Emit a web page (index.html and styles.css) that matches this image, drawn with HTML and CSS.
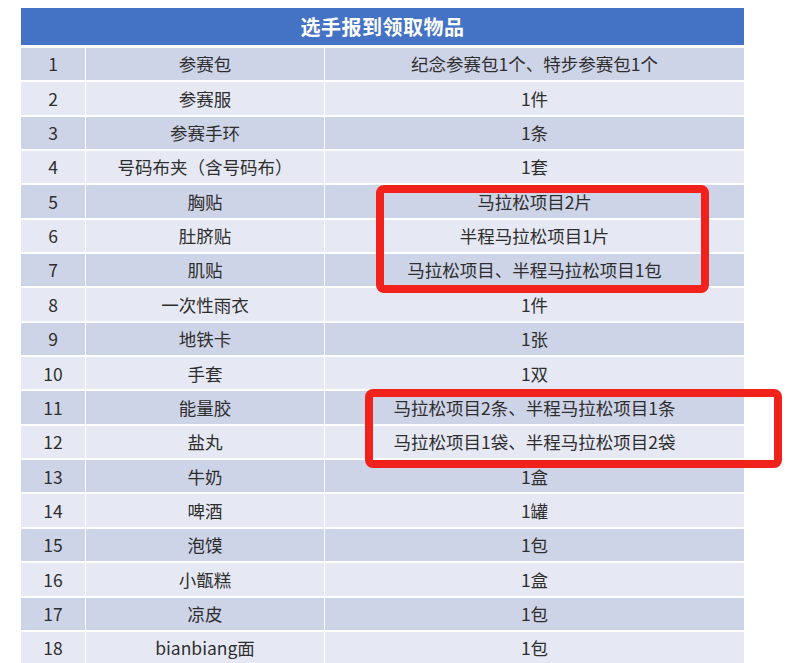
FILE: index.html
```html
<!DOCTYPE html>
<html lang="zh-CN">
<head>
<meta charset="utf-8">
<title>选手报到领取物品</title>
<link rel="stylesheet" href="styles.css">
</head>
<body>
<div class="page">
  <div class="table">
    <div class="head">选手报到领取物品</div>
    <div class="rows">
      <div class="row odd"><div class="c">1</div><div class="c">参赛包</div><div class="c">纪念参赛包1个、特步参赛包1个</div></div>
      <div class="row even"><div class="c">2</div><div class="c">参赛服</div><div class="c">1件</div></div>
      <div class="row odd"><div class="c">3</div><div class="c">参赛手环</div><div class="c">1条</div></div>
      <div class="row even"><div class="c">4</div><div class="c">号码布夹（含号码布）</div><div class="c">1套</div></div>
      <div class="row odd"><div class="c">5</div><div class="c">胸贴</div><div class="c">马拉松项目2片</div></div>
      <div class="row even"><div class="c">6</div><div class="c">肚脐贴</div><div class="c">半程马拉松项目1片</div></div>
      <div class="row odd"><div class="c">7</div><div class="c">肌贴</div><div class="c">马拉松项目、半程马拉松项目1包</div></div>
      <div class="row even"><div class="c">8</div><div class="c">一次性雨衣</div><div class="c">1件</div></div>
      <div class="row odd"><div class="c">9</div><div class="c">地铁卡</div><div class="c">1张</div></div>
      <div class="row even"><div class="c">10</div><div class="c">手套</div><div class="c">1双</div></div>
      <div class="row odd"><div class="c">11</div><div class="c">能量胶</div><div class="c">马拉松项目2条、半程马拉松项目1条</div></div>
      <div class="row even"><div class="c">12</div><div class="c">盐丸</div><div class="c">马拉松项目1袋、半程马拉松项目2袋</div></div>
      <div class="row odd"><div class="c">13</div><div class="c">牛奶</div><div class="c">1盒</div></div>
      <div class="row even"><div class="c">14</div><div class="c">啤酒</div><div class="c">1罐</div></div>
      <div class="row odd"><div class="c">15</div><div class="c">泡馍</div><div class="c">1包</div></div>
      <div class="row even"><div class="c">16</div><div class="c">小甑糕</div><div class="c">1盒</div></div>
      <div class="row odd"><div class="c">17</div><div class="c">凉皮</div><div class="c">1包</div></div>
      <div class="row even"><div class="c">18</div><div class="c">bianbiang面</div><div class="c">1包</div></div>
    </div>
  </div>
  <div class="mark mark-a"></div>
  <div class="mark mark-b"></div>
</div>
</body>
</html>
```

FILE: styles.css
```css
html, body {
  margin: 0;
  padding: 0;
  background: #ffffff;
}
.page {
  position: relative;
  width: 799px;
  height: 663px;
  overflow: hidden;
  padding: 8px 0 0 21px;
  box-sizing: border-box;
  font-family: "Noto Sans CJK SC", "Noto Sans", sans-serif;
  color: #2e2e2e;
}
.table {
  width: 723px;
}
.head {
  height: 37px;
  background: #4472c4;
  color: #ffffff;
  font-weight: 700;
  font-size: 20px;
  line-height: 37px;
  text-align: center;
  margin-bottom: 3px;
  letter-spacing: 0.5px;
}
.rows {
  display: flex;
  flex-direction: column;
  gap: 2px;
}
.row {
  display: grid;
  grid-template-columns: 64px 238px 419px;
  column-gap: 1px;
  height: 32.35px;
  background: #ffffff;
}
.c {
  display: flex;
  align-items: center;
  justify-content: center;
  font-size: 17.5px;
  line-height: 1;
  white-space: nowrap;
}
.odd .c { background: #ced4e8; }
.even .c { background: #e6e9f4; }
.mark {
  position: absolute;
  border: 8px solid #f1221c;
  border-radius: 8px;
  box-sizing: border-box;
}
.mark-a {
  left: 376px;
  top: 185px;
  width: 333px;
  height: 108px;
}
.mark-b {
  left: 365px;
  top: 389px;
  width: 417px;
  height: 79px;
}
```
